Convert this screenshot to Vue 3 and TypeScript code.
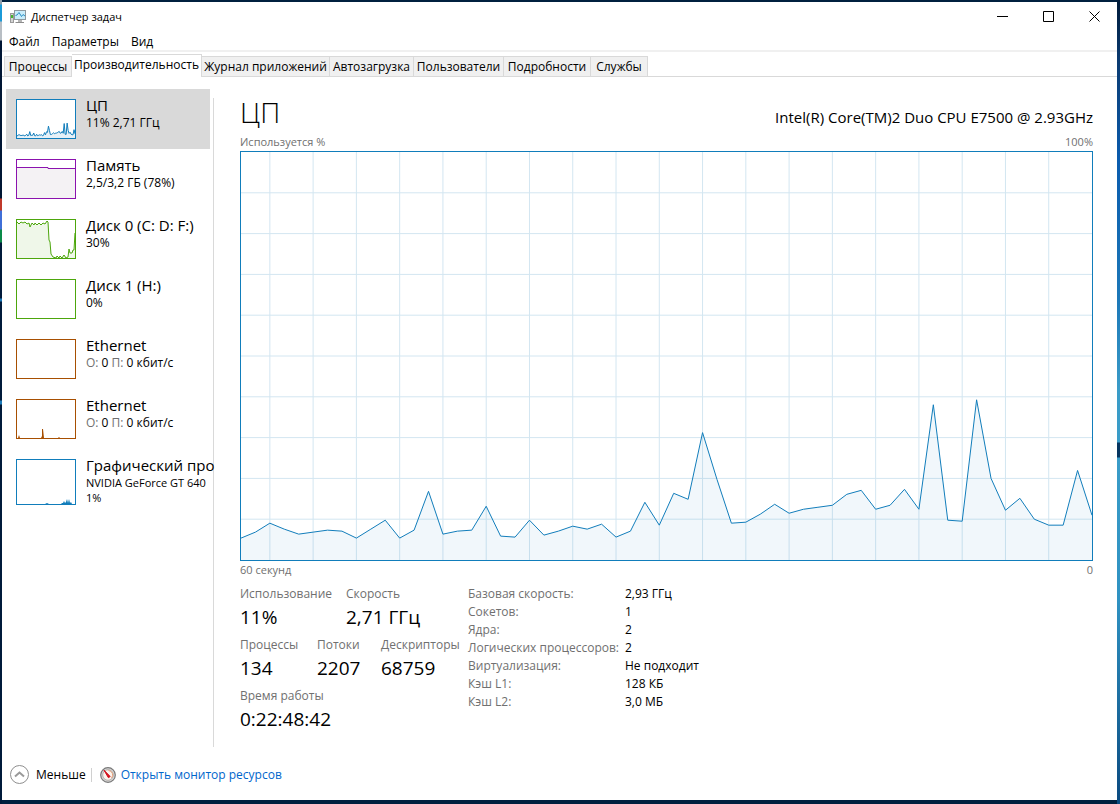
<script setup lang="ts">
import { computed, ref } from 'vue'

interface Device {
  id: string
  name: string
  kind: 'cpu' | 'memory' | 'disk' | 'net' | 'gpu'
  lines: string[]
  net?: boolean
  line: string
  area: string
}

const menus = ['Файл', 'Параметры', 'Вид']
const tabs = ['Процессы', 'Производительность', 'Журнал приложений', 'Автозагрузка', 'Пользователи', 'Подробности', 'Службы']
const activeTab = ref('Производительность')
const selected = ref('cpu')

/* One sample per second, in chart units (0 to 410). */
const samples = [
  22, 28, 37, 31, 26, 28, 30, 29, 22, 31, 40, 22, 30, 69, 26, 29, 30, 54, 24, 23,
  40, 25, 29, 34, 31, 36, 23, 29, 58, 35, 67, 61, 128, 81, 37, 38, 46, 56, 47, 51,
  53, 55, 66, 70, 51, 55, 71, 51, 156, 40, 39, 161, 82, 50, 62, 41, 35, 35, 90, 45,
]

function toPoints(values: number[], width: number, height: number, max: number): string {
  return values
    .map((v, i) => `${((i * width) / (values.length - 1)).toFixed(2)},${(height - (v * height) / max).toFixed(2)}`)
    .join(' ')
}

const line = computed(() => toPoints(samples, 852, 410, 410))
const area = computed(() => `0,410 ${line.value} 852,410`)
const gridX = Array.from({ length: 19 }, (_, i) => ((2 + 3 * i) * 852) / 59)
const gridY = Array.from({ length: 9 }, (_, i) => (i + 1) * 41)

const cpuThumb = toPoints(samples, 58, 38, 410)
const memThumb = '0,7.5 31,7.5 31,8.5 58,8.5'
const diskThumb =
  '0,2 2,4 4,2 6,3 8,2 10,4 12,3 13,7 15,3 17,5 18,3 20,5 22,3 24,5 26,3 28,4 30,1 31,2 32,20 33,22 34,34 36,37 39,38 40,36 42,38 43,36 45,38 47,35 49,38 51,37 52,29 53,33 55,33 56,30 57,30 58,13'
const netThumb = '0,38 1,38 2,35 3,38 24,38 25,36 25,29 26,29 27,38 41,38 42,37 43,38 58,38'
const gpuThumb = '0,44 28,44 30,43 32,44 44,44 45,43 46,43 47,41 48,43 49,42 50,39 51,43 52,39 53,43 54,42 55,44 58,44'

const devices: Device[] = [
  { id: 'cpu', name: 'ЦП', kind: 'cpu', lines: ['11% 2,71 ГГц'], line: cpuThumb, area: `0,38 ${cpuThumb} 58,38` },
  { id: 'mem', name: 'Память', kind: 'memory', lines: ['2,5/3,2 ГБ (78%)'], line: memThumb, area: `0,38 ${memThumb} 58,38` },
  { id: 'disk0', name: 'Диск 0 (C: D: F:)', kind: 'disk', lines: ['30%'], line: diskThumb, area: `0,38 ${diskThumb} 58,38` },
  { id: 'disk1', name: 'Диск 1 (H:)', kind: 'disk', lines: ['0%'], line: '', area: '' },
  { id: 'eth0', name: 'Ethernet', kind: 'net', lines: [], net: true, line: '', area: '' },
  { id: 'eth1', name: 'Ethernet', kind: 'net', lines: [], net: true, line: '', area: netThumb },
  { id: 'gpu', name: 'Графический про', kind: 'gpu', lines: ['NVIDIA GeForce GT 640', '1%'], line: '', area: gpuThumb },
]

const specs = [
  ['Базовая скорость:', '2,93 ГГц'],
  ['Сокетов:', '1'],
  ['Ядра:', '2'],
  ['Логических процессоров:', '2'],
  ['Виртуализация:', 'Не подходит'],
  ['Кэш L1:', '128 КБ'],
  ['Кэш L2:', '3,0 МБ'],
]
</script>

<template>
  <div class="desktop">
    <div class="window">
      <header class="titlebar">
        <svg class="app-icon" width="16" height="16" viewBox="0 0 16 16">
          <rect x="0.5" y="4.5" width="3" height="9" fill="#d4d4d4" stroke="#9a9a9a" />
          <rect x="1" y="6" width="2" height="3" fill="#45b52c" />
          <rect x="4.5" y="1.5" width="11" height="9" fill="#c9edfb" stroke="#8e999f" />
          <path d="M5.500 6.500 L7 6 L9 3.500 L11.500 7.500 L13 5.500 L15 7" fill="none" stroke="#2b8fc4" />
          <path d="M8 11 H12 V13 H8 Z" fill="#b5b5b5" />
          <path d="M5.500 13.500 H14" stroke="#8c8c8c" />
        </svg>
        <h1 class="title">Диспетчер задач</h1>
        <div class="window-buttons">
          <button type="button" aria-label="Свернуть">
            <svg width="11" height="11" viewBox="0 0 11 11"><path d="M0 5.500 H11" /></svg>
          </button>
          <button type="button" aria-label="Развернуть">
            <svg width="11" height="11" viewBox="0 0 11 11"><path d="M0.500 0.500 H10.500 V10.500 H0.500 Z" /></svg>
          </button>
          <button type="button" aria-label="Закрыть">
            <svg width="11" height="11" viewBox="0 0 11 11"><path d="M0.500 0.500 L10.500 10.500 M10.500 0.500 L0.500 10.500" /></svg>
          </button>
        </div>
      </header>

      <nav class="menubar">
        <button v-for="m in menus" :key="m" type="button">{{ m }}</button>
      </nav>

      <div class="tabs" role="tablist">
        <button
          v-for="t in tabs"
          :key="t"
          type="button"
          role="tab"
          class="tab"
          :class="{ active: t === activeTab }"
          :aria-selected="t === activeTab"
          @click="activeTab = t"
        >{{ t }}</button>
      </div>

      <div class="body">
        <aside class="sidebar">
          <button
            v-for="d in devices"
            :key="d.id"
            type="button"
            class="device"
            :class="[d.kind, { selected: d.id === selected }]"
            @click="selected = d.id"
          >
            <span class="thumb">
              <svg :viewBox="d.kind === 'gpu' ? '0 0 58 44' : '0 0 58 38'" preserveAspectRatio="none">
                <polygon v-if="d.area" class="thumb-area" :points="d.area" />
                <polyline v-if="d.line" class="thumb-line" :points="d.line" />
              </svg>
            </span>
            <span class="info">
              <span class="name">{{ d.name }}</span>
              <span v-for="l in d.lines" :key="l" class="sub">{{ l }}</span>
              <span v-if="d.net" class="sub"><i>О:</i> 0 <i>П:</i> 0 кбит/с</span>
            </span>
          </button>
        </aside>

        <main class="detail">
          <div class="heading">
            <h2>ЦП</h2>
            <span class="model">Intel(R) Core(TM)2 Duo CPU E7500 @ 2.93GHz</span>
          </div>
          <div class="axis top"><span>Используется %</span><span>100%</span></div>
          <div class="chart">
            <svg viewBox="0 0 852 410" preserveAspectRatio="none">
              <path v-for="x in gridX" :key="'x' + x" class="grid" :d="`M${x} 0 V410`" />
              <path v-for="y in gridY" :key="'y' + y" class="grid" :d="`M0 ${y} H852`" />
              <polygon class="area" :points="area" />
              <polyline class="line" :points="line" />
            </svg>
          </div>
          <div class="axis bottom"><span>60 секунд</span><span>0</span></div>

          <div class="stats">
            <div class="counters">
              <dl class="row two">
                <div><dt>Использование</dt><dd>11%</dd></div>
                <div><dt>Скорость</dt><dd>2,71 ГГц</dd></div>
              </dl>
              <dl class="row three">
                <div><dt>Процессы</dt><dd>134</dd></div>
                <div><dt>Потоки</dt><dd>2207</dd></div>
                <div><dt>Дескрипторы</dt><dd>68759</dd></div>
              </dl>
              <dl class="row">
                <div><dt>Время работы</dt><dd>0:22:48:42</dd></div>
              </dl>
            </div>
            <table class="specs">
              <tbody>
                <tr v-for="s in specs" :key="s[0]">
                  <th scope="row">{{ s[0] }}</th>
                  <td>{{ s[1] }}</td>
                </tr>
              </tbody>
            </table>
          </div>
        </main>
      </div>

      <footer class="footer">
        <button type="button" class="less">
          <svg width="20" height="20" viewBox="0 0 20 20">
            <circle cx="9.5" cy="9.5" r="9" fill="#fff" stroke="#8f8f8f" />
            <path d="M5 11.500 L9.500 7.500 L14 11.500" fill="none" stroke="#9a9a9a" stroke-width="2" />
          </svg>
          <span>Меньше</span>
        </button>
        <span class="separator"></span>
        <a class="monitor" href="#">
          <svg width="16" height="16" viewBox="0 0 16 16">
            <circle cx="8" cy="8" r="7.300" fill="#d9d9d9" stroke="#777" stroke-width="1.200" />
            <circle cx="8" cy="8" r="5.300" fill="#fbf4ee" stroke="#a9a09a" stroke-width="0.800" />
            <path d="M8.500 3.500 A4.500 4.500 0 0 1 11.500 11" fill="none" stroke="#e8a27a" />
            <path d="M4 3.200 L10.200 9.500 L8.400 10.700 Z" fill="#d3101c" stroke="#d3101c" />
          </svg>
          <span>Открыть монитор ресурсов</span>
        </a>
      </footer>
    </div>
  </div>
</template>

<style>
html,
body {
  margin: 0;
  background: #00203f;
}
</style>

<style scoped>
* {
  box-sizing: border-box;
}

.desktop {
  display: flex;
  height: 100vh;
  min-height: 620px;
  padding: 2px 3px 4px 2px;
  font-family: 'Open Sans', 'Noto Sans', sans-serif;
  font-size: 12px;
  line-height: 16px;
  color: #000;
  background:
    linear-gradient(#001a38 0, #0a3a70 60px, #0a5cae 160px, #1c78b8 300px, #3a9cc8 390px, #3a9cc8 442px, #063560 443px, #063560 457px, #3a9cc8 458px, #2f92c2 600px, #0a4a80 804px) right / 3px 100% no-repeat,
    linear-gradient(#8fa0ae 0, #8fa0ae 4px, #1b9ad8 5px, #1b9ad8 21px, #b8bec4 22px, #b8bec4 40px, #001634 41px, #001634 198px, #c0392b 199px, #c0392b 210px, #3f6fd8 211px, #3f6fd8 229px, #0a8a48 230px, #0a8a48 242px, #001a3a 243px, #001a3a 298px, #1b7ab8 299px, #1b7ab8 301px, #001a3a 302px, #001a3a 400px, #1b7ab8 401px, #1b7ab8 404px, #001a3a 405px) left / 2px 100% no-repeat,
    #00203f;
}

.window {
  flex: 1;
  min-width: 0;
  display: flex;
  flex-direction: column;
  background: #fff;
}

button {
  font: inherit;
  color: inherit;
  margin: 0;
  padding: 0;
  border: 0;
  background: none;
  text-align: left;
  white-space: nowrap;
}

.titlebar {
  display: flex;
  align-items: center;
  height: 29px;
  padding-left: 8px;
}

.title {
  flex: 1;
  margin: 0 0 0 5px;
  font-size: 11px;
  font-weight: 400;
}

.window-buttons {
  display: flex;
}

.window-buttons button {
  display: flex;
  align-items: center;
  justify-content: center;
  width: 46px;
  height: 29px;
}

.window-buttons path {
  fill: none;
  stroke: #000;
}

.menubar {
  display: flex;
  gap: 12px;
  height: 21px;
  padding: 3px 7px 0;
  border-bottom: 2px solid #f0f0f0;
}

.tabs {
  display: grid;
  grid-template-columns: 68px 130px 128px 84px 90px 87px 57px 1fr;
  align-items: end;
  height: 25px;
  padding-left: 2px;
  border-bottom: 1px solid #d9d9d9;
}

.tab {
  height: 20px;
  padding-top: 1px;
  background: #f0f0f0;
  border: 1px solid #d9d9d9;
  border-left-width: 0;
  border-bottom: 0;
  text-align: center;
}

.tab:first-child {
  border-left-width: 1px;
}

.tab.active {
  height: 23px;
  margin-bottom: -1px;
  padding: 0 0 2px;
  background: #fff;
}

.body {
  flex: 1;
  display: flex;
  min-height: 0;
}

.sidebar {
  flex: none;
  width: 212px;
  margin: 12px 0 0;
  padding-left: 4px;
  background: linear-gradient(#d9d9d9, #d9d9d9) right 9px / 1px 100% no-repeat;
}

.device {
  display: flex;
  gap: 10px;
  width: 204px;
  height: 60px;
  padding: 7px 0 0 10px;
}

.device.selected {
  background: #d9d9d9;
}

.device.gpu {
  width: 207px;
  height: 66px;
}

.thumb {
  flex: none;
  width: 60px;
  height: 40px;
  margin-top: 3px;
  border: 1px solid var(--tone);
  background: #fff;
}

.gpu .thumb {
  height: 46px;
}

.thumb svg {
  display: block;
  width: 100%;
  height: 100%;
}

.thumb-area {
  fill: var(--fill);
}

.thumb-line {
  fill: none;
  stroke: var(--tone);
}

.cpu,
.gpu {
  --tone: #117dbb;
  --fill: #e6f1f8;
}

.gpu {
  --fill: #117dbb;
}

.memory {
  --tone: #8b12ae;
  --fill: #f4f2f4;
}

.disk {
  --tone: #4da60c;
  --fill: #eff7e9;
}

.net {
  --tone: #a74f01;
  --fill: #a74f01;
}

.info {
  flex: 1;
  min-width: 0;
}

.name,
.sub {
  display: block;
}

.name {
  font-size: 15px;
  line-height: 19px;
}

.sub {
  line-height: 15px;
}

.gpu .sub {
  font-size: 11px;
}

.sub i {
  font-style: normal;
  color: #707070;
}

.detail {
  flex: 1;
  min-width: 0;
  display: flex;
  flex-direction: column;
  padding: 15px 24px 0 26px;
}

.heading {
  flex: none;
  display: flex;
  align-items: baseline;
  justify-content: space-between;
  height: 42px;
}

.heading h2 {
  margin: 0;
  font-size: 28px;
  line-height: 40px;
  font-weight: 300;
}

.model {
  font-size: 15px;
  line-height: 20px;
}

.axis {
  flex: none;
  display: flex;
  justify-content: space-between;
  font-size: 11px;
  color: #707070;
}

.axis.top {
  height: 17px;
}

.axis.bottom {
  padding-top: 1px;
  height: 24px;
}

.chart {
  flex: 1 1 0;
  min-height: 200px;
  border: 1px solid #117dbb;
}

.chart svg {
  display: block;
  width: 100%;
  height: 100%;
}

.grid,
.line {
  fill: none;
  vector-effect: non-scaling-stroke;
}

.grid {
  stroke: #d3e6f1;
  shape-rendering: crispEdges;
}

.area {
  fill: #117dbb;
  fill-opacity: 0.06;
}

.line {
  stroke: #117dbb;
}

.stats {
  flex: none;
  display: flex;
  height: 162px;
}

.counters {
  width: 228px;
}

.row {
  display: grid;
  margin: 0;
  height: 51px;
}

.row.two {
  grid-template-columns: 106px 1fr;
}

.row.three {
  grid-template-columns: 77px 64px 1fr;
}

dt,
.specs th {
  color: #707070;
}

dt {
  line-height: 18px;
}

dd {
  margin: 0;
  font-size: 19px;
  line-height: 28px;
}

.specs {
  border-collapse: collapse;
  align-self: flex-start;
}

.specs th,
.specs td {
  padding: 0;
  height: 18px;
  line-height: 18px;
  font-weight: 400;
  text-align: left;
  white-space: nowrap;
}

.specs th {
  width: 157px;
}

.footer {
  flex: none;
  display: flex;
  align-items: center;
  height: 53px;
  padding: 2px 8px 0;
}

.less,
.monitor {
  display: flex;
  align-items: center;
}

.less {
  gap: 6px;
}

.separator {
  width: 1px;
  height: 14px;
  margin: 0 8px 0 5px;
  background: #d0d0d0;
}

.monitor {
  gap: 5px;
  color: #0066cc;
  text-decoration: none;
}
</style>
